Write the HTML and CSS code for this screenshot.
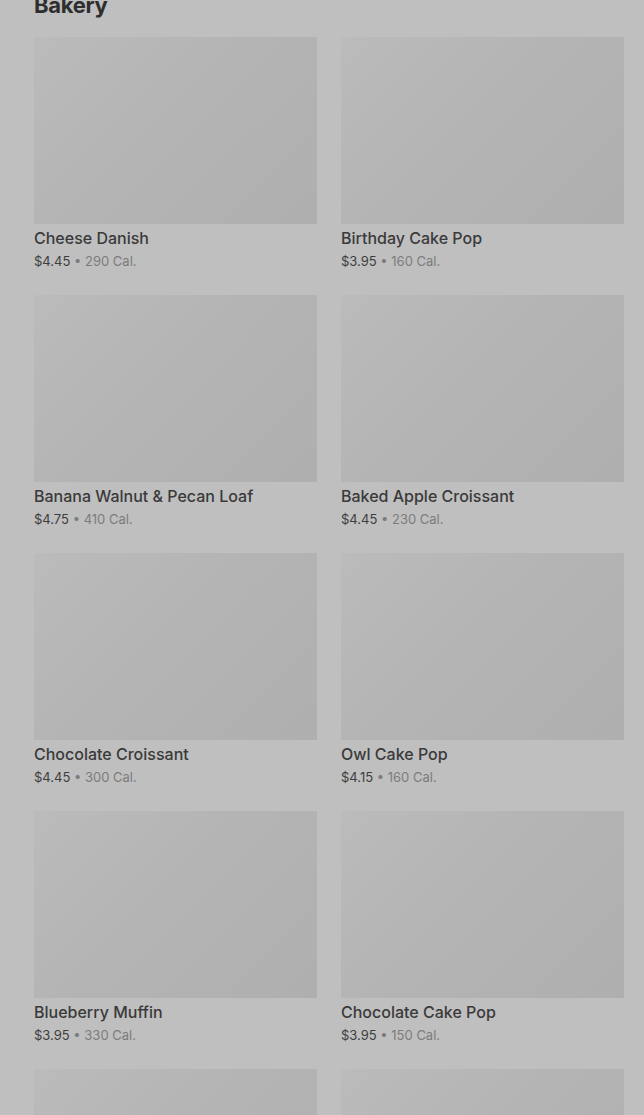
FILE: index.html
```html
<!DOCTYPE html>
<html lang="en">
<head>
  <meta charset="UTF-8" />
  <title>Bakery</title>
  <link rel="stylesheet" href="styles.css">
</head>
<body>

<section class="menu-section">
  <h2 class="section-title">Bakery</h2>
  <div class="grid">
    <div class="item">
      <div class="thumb"></div>
      <div class="name">Cheese Danish</div>
      <div class="meta"><span class="price">$4.45</span> • 290 Cal.</div>
    </div>
    <div class="item">
      <div class="thumb"></div>
      <div class="name">Birthday Cake Pop</div>
      <div class="meta"><span class="price">$3.95</span> • 160 Cal.</div>
    </div>
    <div class="item">
      <div class="thumb"></div>
      <div class="name">Banana Walnut &amp; Pecan Loaf</div>
      <div class="meta"><span class="price">$4.75</span> • 410 Cal.</div>
    </div>
    <div class="item">
      <div class="thumb"></div>
      <div class="name">Baked Apple Croissant</div>
      <div class="meta"><span class="price">$4.45</span> • 230 Cal.</div>
    </div>
    <div class="item">
      <div class="thumb"></div>
      <div class="name">Chocolate Croissant</div>
      <div class="meta"><span class="price">$4.45</span> • 300 Cal.</div>
    </div>
    <div class="item">
      <div class="thumb"></div>
      <div class="name">Owl Cake Pop</div>
      <div class="meta"><span class="price">$4.15</span> • 160 Cal.</div>
    </div>
    <div class="item">
      <div class="thumb"></div>
      <div class="name">Blueberry Muffin</div>
      <div class="meta"><span class="price">$3.95</span> • 330 Cal.</div>
    </div>
    <div class="item">
      <div class="thumb"></div>
      <div class="name">Chocolate Cake Pop</div>
      <div class="meta"><span class="price">$3.95</span> • 150 Cal.</div>
    </div>
    <div class="item">
      <div class="thumb"></div>
    </div>
    <div class="item">
      <div class="thumb"></div>
    </div>
  </div>
</section>

</body>
</html>
```
FILE: styles.css
```css
html, body { margin: 0; background: #bfbfbf; }
body { font-family: Inter, Roboto, "Liberation Sans", sans-serif; color: #333; overflow: hidden; height: 1115px; }
.menu-section { padding: 0 20px 0 34px; }
.section-title { font-size: 22px; font-weight: 700; color: #2e2e2e; margin: -9px 0 0; line-height: 28px; height: 28px; letter-spacing: -0.3px; }
.grid { display: grid; grid-template-columns: 283px 283px; column-gap: 24px; row-gap: 25px; margin-top: 18px; }
.item { display: flex; flex-direction: column; }
.thumb { height: 187px; background: linear-gradient(135deg, #bbbbbb 0%, #b4b4b4 45%, #afafaf 100%); }
.name { font-size: 16px; font-weight: 500; color: #3a3a3a; margin-top: 4px; line-height: 20px; }
.meta { font-size: 13px; color: #7c7c7c; margin-top: 5px; line-height: 17px; }
.price { color: #3e3e3e; }
```
